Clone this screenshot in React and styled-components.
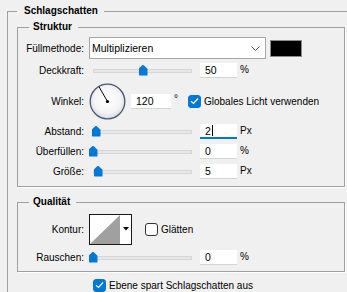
import React from "react";
import styled, { createGlobalStyle } from "styled-components";

const GlobalStyle = createGlobalStyle`
  html, body {
    margin: 0;
    padding: 0;
    background: #f0f0f0;
    overflow: hidden;
  }
  body {
    font-family: "Liberation Sans", Arial, sans-serif;
    font-size: 10px;
    color: #000;
  }
`;

const Page = styled.div`
  width: 347px;
  height: 292px;
  overflow: hidden;
  box-sizing: border-box;
  padding: 4px 0 0 7px;
`;

const Group = styled.fieldset`
  margin: ${(p) => p.$mt || 0}px 0 0 0;
  padding: ${(p) => p.$pad};
  width: ${(p) => p.$width}px;
  min-width: 0;
  box-sizing: border-box;
  border: 1px solid #a0a0a0;
  box-shadow: 1px 1px 0 #fff;
`;

const Legend = styled.legend`
  margin-left: ${(p) => p.$offset}px;
  padding: 0 6px 0 ${(p) => p.$pl}px;
  font-weight: bold;
  line-height: 14px;
`;

const Rows = styled.div`
  display: flex;
  flex-direction: column;
  gap: ${(p) => p.$gap}px;
`;

const Row = styled.div`
  display: flex;
  align-items: center;
  height: ${(p) => p.$h}px;
`;

const Label = styled.span`
  width: 66px;
  flex-shrink: 0;
  text-align: right;
  margin-right: 5px;
  white-space: nowrap;
`;

const Select = styled.div`
  width: 177px;
  height: 22px;
  box-sizing: border-box;
  display: flex;
  align-items: center;
  justify-content: space-between;
  padding: 0 5px 0 2px;
  background: #fff;
  border: 1px solid #a6a6a6;
  font-size: 10.5px;
`;

const Swatch = styled.div`
  width: 32px;
  height: 17px;
  margin-left: 4px;
  box-sizing: border-box;
  background: #000;
  border: 1px solid #8c8c8c;
`;

const SliderBox = styled.div`
  position: relative;
  width: 107px;
  height: 12px;
  flex-shrink: 0;
  box-sizing: border-box;
  padding: 0 4px;
  display: flex;
  align-items: center;
`;

const Track = styled.div`
  flex: 1;
  height: 4px;
  box-sizing: border-box;
  background: #e7e7e7;
  border: 1px solid #d6d6d6;
`;

const Thumb = styled.div`
  position: absolute;
  top: 0;
  width: 9px;
  height: 11px;
  background: #0078d7;
  border-radius: 1px;
  clip-path: polygon(50% 0, 100% 38%, 100% 100%, 0 100%, 0 38%);
`;

const NumField = styled.div`
  width: ${(p) => p.$w || 37}px;
  height: 15px;
  margin-left: ${(p) => p.$ml || 4}px;
  box-sizing: border-box;
  display: flex;
  align-items: center;
  padding-left: 5px;
  background: #fff;
  border-bottom: ${(p) => (p.$active ? "2px solid #0078d7" : "1px solid #d4d4d4")};
  font-size: 10.5px;
`;

const Caret = styled.span`
  display: inline-block;
  width: 1px;
  height: 11px;
  margin-left: 1px;
  background: #000;
`;

const Unit = styled.span`
  margin-left: 3px;
  padding-bottom: 3px;
`;

const Degree = styled.span`
  margin-left: 3px;
  padding-bottom: 5px;
`;

const Check = styled.span`
  width: 13px;
  height: 13px;
  margin-left: ${(p) => p.$ml}px;
  flex-shrink: 0;
  box-sizing: border-box;
  border-radius: 3px;
  display: flex;
  align-items: center;
  justify-content: center;
  background: ${(p) => (p.$checked ? "#0078d7" : "#fff")};
  border: 1px solid ${(p) => (p.$checked ? "#0078d7" : "#333")};
`;

const CheckText = styled.span`
  margin-left: 3px;
  white-space: nowrap;
`;

const Contour = styled.div`
  width: 43px;
  height: 31px;
  box-sizing: border-box;
  display: flex;
  background: #fff;
  border: 1px solid #1a1a1a;
`;

const ContourArrow = styled.div`
  flex: 1;
  display: flex;
  align-items: center;
  justify-content: center;
`;

const BottomRow = styled.div`
  display: flex;
  align-items: center;
  height: 14px;
  margin: 6px 0 0 76px;
`;

const Tick = () => (
  <svg width="9" height="8" viewBox="0 0 9 8">
    <path d="M1 4.2 L3.5 6.5 L8 1.5" fill="none" stroke="#fff" strokeWidth="1.2" />
  </svg>
);

const CheckBox = ({ checked, ml = 0 }) => (
  <Check $checked={checked} $ml={ml}>
    {checked && <Tick />}
  </Check>
);

const Slider = ({ pos }) => (
  <SliderBox>
    <Track />
    <Thumb style={{ left: 4 + pos - 4.5 }} />
  </SliderBox>
);

const SliderRow = ({ label, pos, value, unit, active }) => (
  <Row $h={17}>
    <Label>{label}</Label>
    <Slider pos={pos} />
    <NumField $active={active}>
      {value}
      {active && <Caret />}
    </NumField>
    <Unit>{unit}</Unit>
  </Row>
);

const Dial = () => (
  <svg width="37" height="37" viewBox="0 0 37 37" style={{ flexShrink: 0 }}>
    <defs>
      <radialGradient id="dialFill" cx="50%" cy="45%" r="55%">
        <stop offset="0%" stopColor="#ffffff" />
        <stop offset="70%" stopColor="#f4f4f6" />
        <stop offset="100%" stopColor="#d8dae0" />
      </radialGradient>
    </defs>
    <circle cx="18.5" cy="18.5" r="17.3" fill="url(#dialFill)" stroke="#4a5570" strokeWidth="1.3" />
    <line x1="18.5" y1="18.5" x2="10" y2="3.8" stroke="#000" strokeWidth="1" />
    <circle cx="18.5" cy="18.5" r="1.6" fill="#000" />
  </svg>
);

const Chevron = () => (
  <svg width="9" height="5" viewBox="0 0 9 5">
    <path d="M0.5 0.5 L4.5 4.5 L8.5 0.5" fill="none" stroke="#555" strokeWidth="1" />
  </svg>
);

export default function App() {
  return (
    <>
      <GlobalStyle />
      <Page>
        <Group $width={370} $pad="2px 0 30px 9px">
          <Legend $offset={0} $pl={7}>Schlagschatten</Legend>

          <Group $width={328} $pad="3px 0 6px 0">
            <Legend $offset={11} $pl={4}>Struktur</Legend>
            <Rows $gap={3}>
              <Row $h={22}>
                <Label>Füllmethode:</Label>
                <Select>
                  <span>Multiplizieren</span>
                  <Chevron />
                </Select>
                <Swatch />
              </Row>
              <SliderRow label="Deckkraft:" pos={50} value="50" unit="%" />
              <Row $h={38}>
                <Label>Winkel:</Label>
                <Dial />
                <NumField $w={40} $ml={5}>120</NumField>
                <Degree>°</Degree>
                <CheckBox checked ml={10} />
                <CheckText>Globales Licht verwenden</CheckText>
              </Row>
              <SliderRow label="Abstand:" pos={3} value="2" unit="Px" active />
              <SliderRow label="Überfüllen:" pos={0} value="0" unit="%" />
              <SliderRow label="Größe:" pos={5} value="5" unit="Px" />
            </Rows>
          </Group>

          <Group $width={328} $pad="4px 0 5px 0" $mt={8}>
            <Legend $offset={11} $pl={4}>Qualität</Legend>
            <Rows $gap={4}>
              <Row $h={32}>
                <Label>Kontur:</Label>
                <Contour>
                  <svg width="30" height="29" viewBox="0 0 30 29">
                    <polygon points="0,29 30,0 30,29" fill="#a0a0a0" />
                  </svg>
                  <ContourArrow>
                    <svg width="6" height="4" viewBox="0 0 6 4">
                      <polygon points="0,0 6,0 3,3.5" fill="#000" />
                    </svg>
                  </ContourArrow>
                </Contour>
                <CheckBox ml={13} />
                <CheckText>Glätten</CheckText>
              </Row>
              <SliderRow label="Rauschen:" pos={0} value="0" unit="%" />
            </Rows>
          </Group>

          <BottomRow>
            <CheckBox checked />
            <CheckText>Ebene spart Schlagschatten aus</CheckText>
          </BottomRow>
        </Group>
      </Page>
    </>
  );
}
